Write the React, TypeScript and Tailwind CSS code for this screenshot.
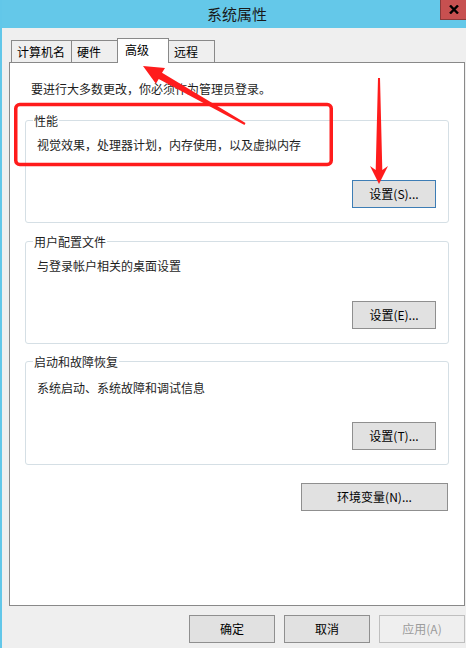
import React from 'react';

const font = "font-['Microsoft_YaHei','Noto_Sans_CJK_SC',sans-serif]";

function Btn({ label, focused, disabled, width }: { label: string; focused?: boolean; disabled?: boolean; width: string }) {
  const tone = disabled
    ? 'border-[#bfbfbf] bg-[#efefef] text-[#9c9c9c]'
    : focused
    ? 'border-[#3d7db5] bg-[#e1e1e1] text-black'
    : 'border-[#8f8f8f] bg-[#e1e1e1] text-black';
  return (
    <button className={`${width} h-[28px] border ${tone} text-[12px] leading-[16px] flex items-center justify-center`}>
      {label}
    </button>
  );
}

function Group({ title, desc, button, focused, top }: { title: string; desc: string; button: string; focused?: boolean; top: 'a' | 'b' }) {
  return (
    <div className="relative w-[424px] border border-[#d5dfe5] rounded-[3px] flex flex-col">
      <span className="absolute -top-[8px] left-[7px] px-[1px] bg-white text-[12px] leading-[16px] text-[#1e1e1e]">{title}</span>
      <p className={`${top === 'a' ? 'pt-[16px]' : 'pt-[18px]'} pl-[11px] text-[12px] leading-[16px] text-[#1e1e1e]`}>{desc}</p>
      <div className={`${top === 'a' ? 'mt-[27px]' : 'mt-[26px]'} mb-[14px] pr-[12px] flex justify-end`}>
        <Btn label={button} focused={focused} width="w-[84px]" />
      </div>
    </div>
  );
}

export default function App() {
  const tabs = [
    { name: '计算机名', w: 'w-[61px]', active: false },
    { name: '硬件', w: 'w-[47px]', active: false },
    { name: '高级', w: 'w-[52px]', active: true },
    { name: '远程', w: 'w-[47px]', active: false },
  ];

  return (
    <div className={`relative w-[466px] h-[648px] overflow-hidden ${font}`}>
      <div className="w-[466px] h-[648px] bg-[#efefef] border-l-2 border-[#62c7e9] flex flex-col">
        {/* title bar */}
        <div className="relative h-[28px] bg-[#64c8e9] flex items-center justify-center pl-[6px] text-[15px] text-[#1a1a1a]">
          系统属性
          <div className="absolute right-0 top-0 w-[26px] h-[20px] bg-[#c75050] border-l border-b border-[#8a3a3a] flex items-center justify-center">
            <svg width="10" height="9" viewBox="0 0 10 9">
              <path d="M1 0.5 L9 8.5 M9 0.5 L1 8.5" stroke="#000" strokeWidth="2.4" />
            </svg>
          </div>
        </div>

        {/* tabs */}
        <div className="mt-[10px] ml-[9px] flex items-end">
          {tabs.map((t) =>
            t.active ? (
              <div key={t.name} className={`${t.w} -ml-px h-[25px] -mb-px relative z-10 bg-white border-t border-l border-r border-[#898989] pl-[7px] pt-[3px] text-[12px] leading-[16px] text-black`}>
                {t.name}
              </div>
            ) : (
              <div key={t.name} className={`${t.w} -ml-px first:ml-0 h-[22px] bg-[#efefef] border-t border-l border-r border-[#898989] pl-[5px] flex items-center text-[12px] leading-[16px] text-black`}>
                {t.name}
              </div>
            )
          )}
        </div>

        {/* panel */}
        <div className="ml-[7px] w-[456px] h-[544px] bg-white border border-[#898989] flex flex-col px-[15px]">
          <p className="pt-[18px] pl-[6px] text-[12px] leading-[16px] text-[#1e1e1e]">要进行大多数更改，你必须作为管理员登录。</p>
          <div className="mt-[23px]">
            <Group title="性能" desc="视觉效果，处理器计划，内存使用，以及虚拟内存" button="设置(S)..." focused top="a" />
          </div>
          <div className="mt-[18px]">
            <Group title="用户配置文件" desc="与登录帐户相关的桌面设置" button="设置(E)..." top="a" />
          </div>
          <div className="mt-[17px]">
            <Group title="启动和故障恢复" desc="系统启动、系统故障和调试信息" button="设置(T)..." top="b" />
          </div>
          <div className="mt-[18px] w-[423px] flex justify-end">
            <Btn label="环境变量(N)..." width="w-[147px]" />
          </div>
        </div>

        {/* dialog buttons */}
        <div className="mt-[9px] ml-[7px] w-[456px] flex justify-end gap-[9px]">
          <Btn label="确定" width="w-[86px]" />
          <Btn label="取消" width="w-[86px]" />
          <Btn label="应用(A)" disabled width="w-[86px]" />
        </div>
      </div>

      {/* red annotations drawn over the dialog */}
      <svg className="absolute top-0 left-0 pointer-events-none" width="466" height="648" viewBox="0 0 466 648">
        <rect x="15.75" y="104.5" width="315.5" height="60" rx="4" fill="none" stroke="#ff1c1c" strokeWidth="3.5" />
        <polygon
          points="143,66 165,68 162,72.8 245.5,123 244.5,125 158.7,79 155.9,83.7"
          fill="#ff1c1c"
        />
        <polygon points="379,184 388,166 382.3,170 380,78 378,78 375.7,170 370,166" fill="#ff1c1c" />
      </svg>
    </div>
  );
}
